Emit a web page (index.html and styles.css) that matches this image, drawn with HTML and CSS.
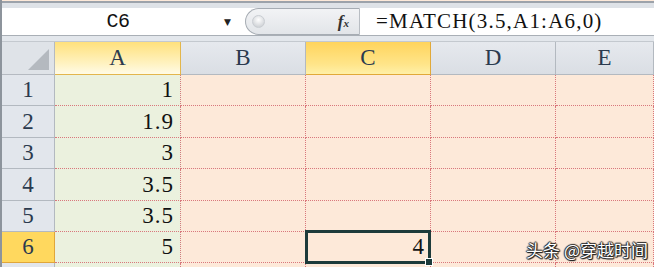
FILE: index.html
```html
<html lang="zh">
<head>
  <meta charset="UTF-8">
  <title>MATCH</title>
  <link rel="stylesheet" href="styles.css">
</head>
<body>
  <div class="top-strip"></div>
  <div class="formula-bar">
    <div class="name-box">
      <span class="cell-ref">C6</span>
      <span class="drop">&#9660;</span>
    </div>
    <div class="handle">
      <span class="knob"></span>
      <span class="fx">f<small>x</small></span>
    </div>
    <div class="formula">=MATCH(3.5,A1:A6,0)</div>
  </div>
  <div class="gap-strip"></div>

  <div class="sheet">
    <div class="corner"><span class="tri"></span></div>
    <div class="col-head hl-a">A</div>
    <div class="col-head">B</div>
    <div class="col-head hl-c">C</div>
    <div class="col-head">D</div>
    <div class="col-head">E</div>

    <div class="row-head">1</div>
    <div class="cell a">1</div><div class="cell"></div><div class="cell"></div><div class="cell"></div><div class="cell"></div>

    <div class="row-head">2</div>
    <div class="cell a">1.9</div><div class="cell"></div><div class="cell"></div><div class="cell"></div><div class="cell"></div>

    <div class="row-head">3</div>
    <div class="cell a">3</div><div class="cell"></div><div class="cell"></div><div class="cell"></div><div class="cell"></div>

    <div class="row-head">4</div>
    <div class="cell a">3.5</div><div class="cell"></div><div class="cell"></div><div class="cell"></div><div class="cell"></div>

    <div class="row-head">5</div>
    <div class="cell a">3.5</div><div class="cell"></div><div class="cell"></div><div class="cell"></div><div class="cell"></div>

    <div class="row-head hl-row">6</div>
    <div class="cell a">5</div><div class="cell"></div>
    <div class="cell active">4<span class="fill-handle"></span></div>
    <div class="cell"></div><div class="cell"></div>

    <div class="row-head"></div>
    <div class="cell a"></div><div class="cell"></div><div class="cell"></div><div class="cell"></div><div class="cell"></div>
  </div>

  <div class="watermark">头条 @穿越时间</div>
</body>
</html>
```

FILE: styles.css
```css
body {
  margin: 0;
  width: 654px;
  height: 267px;
  overflow: hidden;
  position: relative;
  background: #fde9d9;
  font-family: "Liberation Serif", serif;
  border-left: 2px solid #8d949c;
  box-sizing: border-box;
}
.top-strip {
  height: 5px;
  background: #dee2e7;
  border-top: 2px solid #9ca2aa;
  margin-top: 1px;
}
.formula-bar {
  display: flex;
  height: 27px;
  background: #fff;
  border-bottom: 1px solid #a9afb6;
}
.name-box {
  width: 243px;
  display: flex;
  align-items: center;
}
.cell-ref {
  flex: 1;
  text-align: center;
  font-family: "Liberation Mono", monospace;
  font-size: 20px;
  letter-spacing: -0.5px;
  padding-left: 10px;
  color: #111;
}
.drop {
  font-size: 9px;
  color: #222;
  margin-right: 14px;
  font-family: "DejaVu Sans", sans-serif;
}
.handle {
  width: 115px;
  background: linear-gradient(#f2f3f5, #e2e5e9);
  border: 1px solid #a6acb3;
  border-right: 1px solid #b8bdc3;
  border-radius: 14px 0 0 14px;
  display: flex;
  align-items: center;
  justify-content: space-between;
  padding: 0 6px;
  box-sizing: border-box;
}
.knob {
  width: 11px;
  height: 11px;
  border-radius: 50%;
  background: radial-gradient(circle at 50% 35%, #fff, #c3c7cc);
  border: 1px solid #c9cdd2;
}
.fx {
  font-style: italic;
  font-weight: bold;
  font-size: 17px;
  color: #333;
  margin-right: 4px;
}
.fx small {
  font-size: 11px;
}
.formula {
  flex: 1;
  padding-left: 16px;
  font-size: 21px;
  letter-spacing: 1.2px;
  line-height: 27px;
  color: #111;
}
.gap-strip {
  height: 5px;
  background: #e3e7ec;
  border-bottom: 1px solid #c4c9cf;
}

.sheet {
  display: grid;
  grid-template-columns: 53px 126px 125px 125px 125px 98px;
  grid-template-rows: 33px 31px 32px 31px 32px 31px 31px 10px;
}
.corner {
  background: #dfe3e8;
  border-right: 1px solid #b5bac1;
  border-bottom: 1px solid #b5bac1;
  position: relative;
}
.tri {
  position: absolute;
  right: 5px;
  bottom: 4px;
  width: 0;
  height: 0;
  border-left: 21px solid transparent;
  border-bottom: 21px solid #b4b9bf;
}
.col-head {
  background: linear-gradient(#e6e9ee, #dadee4);
  border-right: 1px solid #b3b9c0;
  border-bottom: 1px solid #b3b9c0;
  display: flex;
  align-items: center;
  justify-content: center;
  font-size: 23px;
  color: #2b3a4e;
}
.col-head.hl-a {
  background: linear-gradient(#ffe17c, #fff3c4 70%, #fffbe6);
  border-color: #e3b64c;
}
.col-head.hl-c {
  background: linear-gradient(#ffd45c, #ffe58a 70%, #fff0a8);
  border-color: #e1a93a;
}
.row-head {
  background: #e2e6ec;
  border-right: 1px solid #b3b9c0;
  border-bottom: 1px solid #b3b9c0;
  display: flex;
  align-items: center;
  justify-content: center;
  font-size: 23px;
  color: #2b3a4e;
}
.row-head.hl-row {
  background: #ffd85e;
  border-color: #e0a63a;
}
.cell {
  border-right: 1px dotted #d9777c;
  border-bottom: 1px dotted #d9777c;
  display: flex;
  align-items: center;
  justify-content: flex-end;
  padding-right: 6px;
  font-size: 23px;
  letter-spacing: 1px;
  color: #111;
}
.cell.a {
  background: #ebf1de;
}
.cell.active {
  position: relative;
  border: 3px solid #1d3b3b;
  margin: -2px 0 -1px -1px;
  padding-right: 3px;
}
.fill-handle {
  position: absolute;
  right: -5px;
  bottom: -5px;
  width: 6px;
  height: 6px;
  background: #1d3b3b;
  border: 1px solid #fff;
}
.watermark {
  position: absolute;
  right: 6px;
  bottom: 8px;
  line-height: 18px;
  font-family: "Noto Sans CJK SC", sans-serif;
  font-size: 17px;
  color: #fff;
  text-shadow: 1px 0 1px #222, -1px 0 1px #222, 0 1px 1px #222, 0 -1px 1px #222, 1px 1px 1px #333;
}
```
